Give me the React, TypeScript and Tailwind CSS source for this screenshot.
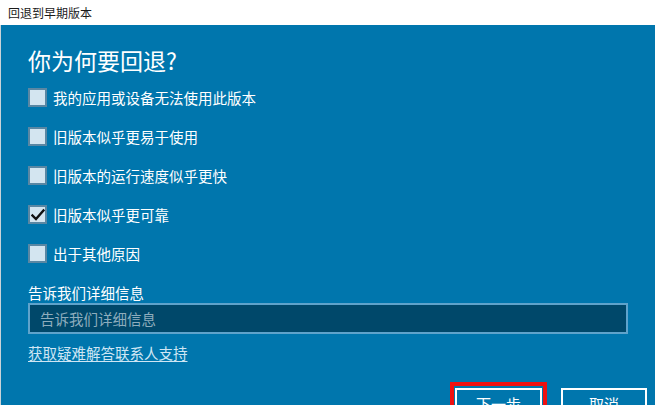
import React, { useState } from "react";

const reasons = [
  "我的应用或设备无法使用此版本",
  "旧版本似乎更易于使用",
  "旧版本的运行速度似乎更快",
  "旧版本似乎更可靠",
  "出于其他原因",
];

function CheckBox({ checked }: { checked: boolean }) {
  return (
    <div className="h-[19px] w-[19px] shrink-0 border-2 border-[#5a87a3] bg-[#d3e5f0] flex items-center justify-center">
      {checked && (
        <svg width="14" height="14" viewBox="0 0 14 14">
          <path d="M1.5 7.5 L5 11 L12.5 2.5" fill="none" stroke="#111" strokeWidth="2.4" strokeLinecap="square" />
        </svg>
      )}
    </div>
  );
}

export default function App() {
  const [checked, setChecked] = useState<number[]>([3]);
  const [details, setDetails] = useState("");

  const toggle = (i: number) =>
    setChecked(prev => (prev.includes(i) ? prev.filter(x => x !== i) : [...prev, i]));

  return (
    <div
      className="h-[405px] w-[655px] overflow-hidden flex flex-col"
      style={{ fontFamily: '"Noto Sans CJK SC", "Noto Sans", sans-serif' }}
    >
      {/* Title bar */}
      <div className="h-[25px] shrink-0 bg-white flex items-center pl-[8px] text-[12px] text-[#1a1a1a]">
        回退到早期版本
      </div>

      {/* Body */}
      <div className="flex-1 bg-[#0076ad] border-l border-[#c9d3d8] pl-[27px] pr-[8px] text-white flex flex-col">
        <h1 className="mt-[21px] text-[23px] leading-[28px] font-normal">你为何要回退?</h1>

        <div className="mt-[14px] flex flex-col gap-[20px]">
          {reasons.map((r, i) => (
            <label key={r} onClick={() => toggle(i)} className="flex items-center gap-[6px] h-[19px] cursor-pointer">
              <CheckBox checked={checked.includes(i)} />
              <span className="text-[14.5px] leading-[19px]">{r}</span>
            </label>
          ))}
        </div>

        <div className="mt-[20px] text-[14.5px] leading-[20px]">告诉我们详细信息</div>
        <div className="mr-[19px]">
          <input
            value={details}
            onChange={e => setDetails(e.target.value)}
            placeholder="告诉我们详细信息"
            className="w-full h-[31px] bg-[#00486a] border-2 border-[#5fa3cb] px-[10px] text-[14.5px] text-white placeholder:text-[#8eadbd] outline-none"
          />
        </div>

        <a href="#" className="mt-[9px] self-start text-[14.5px] leading-[20px] text-[#cfe6f4] underline underline-offset-2">
          获取疑难解答联系人支持
        </a>

        <div className="mt-[19px] flex justify-end items-start gap-[14px]">
          <div className="border-4 border-[#ee1111] pt-[2px] px-[1px] pb-[1px]">
            <button className="w-[87px] h-[32px] border-2 border-white text-[15px] text-white">下一步</button>
          </div>
          <button className="mt-[6px] w-[86px] h-[32px] border-2 border-white text-[15px] text-white">取消</button>
        </div>
      </div>
    </div>
  );
}
